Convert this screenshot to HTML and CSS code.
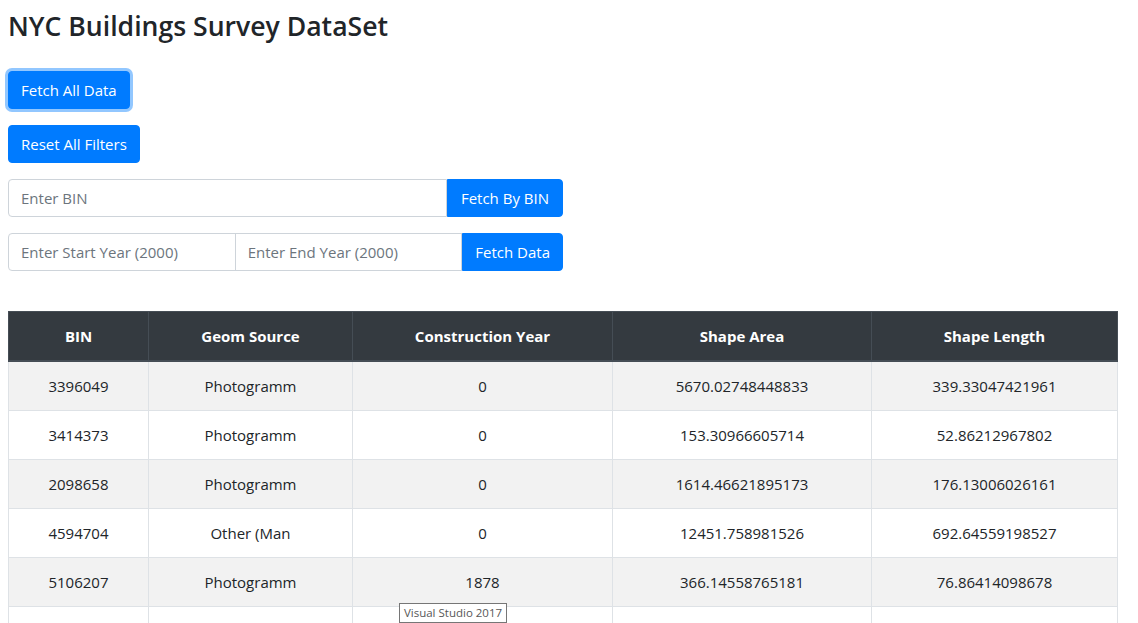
FILE: index.html
```html
<!DOCTYPE html>
<html>
<head>
<meta charset="utf-8">
<link rel="stylesheet" href="styles.css">
</head>
<body>
<div class="page">
  <h3 class="title">NYC Buildings Survey DataSet</h3>
  <div class="actions">
    <button class="btn btn-focus">Fetch All Data</button>
    <button class="btn">Reset All Filters</button>
  </div>
  <div class="input-group">
    <input class="field field-first" placeholder="Enter BIN">
    <button class="btn btn-append btn-wide">Fetch By BIN</button>
  </div>
  <div class="input-group">
    <input class="field field-first" placeholder="Enter Start Year (2000)">
    <input class="field field-mid" placeholder="Enter End Year (2000)">
    <button class="btn btn-append">Fetch Data</button>
  </div>
  <table class="data-table">
    <thead>
      <tr>
        <th class="c1">BIN</th>
        <th class="c2">Geom Source</th>
        <th class="c3">Construction Year</th>
        <th class="c4">Shape Area</th>
        <th class="c5">Shape Length</th>
      </tr>
    </thead>
    <tbody>
      <tr><td>3396049</td><td>Photogramm</td><td>0</td><td>5670.02748448833</td><td>339.33047421961</td></tr>
      <tr><td>3414373</td><td>Photogramm</td><td>0</td><td>153.30966605714</td><td>52.86212967802</td></tr>
      <tr><td>2098658</td><td>Photogramm</td><td>0</td><td>1614.46621895173</td><td>176.13006026161</td></tr>
      <tr><td>4594704</td><td>Other (Man</td><td>0</td><td>12451.758981526</td><td>692.64559198527</td></tr>
      <tr><td>5106207</td><td>Photogramm</td><td>1878</td><td>366.14558765181</td><td>76.86414098678</td></tr>
      <tr class="partial"><td></td><td></td><td></td><td></td><td></td></tr>
    </tbody>
  </table>
</div>
<div class="tooltip">Visual Studio 2017</div>
</body>
</html>
```
FILE: styles.css
```css
html, body {
  margin: 0;
  padding: 0;
  background: #fff;
  overflow: hidden;
}
body {
  font-family: "Open Sans", "Noto Sans", sans-serif;
  font-size: 15px;
  color: #212529;
  height: 623px;
}
.page {
  padding: 8px;
}
.title {
  font-size: 26.6px;
  font-weight: 600;
  line-height: 34px;
  margin: 1px 0 0 0;
  color: #212529;
}
.actions {
  display: flex;
  flex-direction: column;
  align-items: flex-start;
  gap: 16px;
  margin-top: 28px;
}
.btn {
  font-family: inherit;
  font-size: 15px;
  line-height: 24px;
  padding: 6px 12px;
  height: 38px;
  border: 1px solid #007bff;
  background: #007bff;
  color: #fff;
  border-radius: 4px;
  cursor: pointer;
}
.btn-focus {
  box-shadow: 0 0 0 3px rgba(38, 143, 255, 0.5);
}
.input-group {
  display: flex;
  width: 555px;
  margin-top: 16px;
  height: 38px;
}
.field {
  flex: 1 1 0;
  min-width: 0;
  font-family: inherit;
  font-size: 15px;
  height: 38px;
  box-sizing: border-box;
  padding: 6px 12px;
  border: 1px solid #ced4da;
  color: #495057;
  outline: none;
}
.field::placeholder {
  color: #6c757d;
}
.field-first {
  border-radius: 4px 0 0 4px;
}
.field-mid {
  margin-left: -1px;
  border-radius: 0;
}
.btn-append {
  border-radius: 0 4px 4px 0;
  flex: none;
}
.btn-wide {
  padding: 6px 13px;
}
.data-table {
  margin-top: 40px;
  width: 1110px;
  border-collapse: collapse;
  table-layout: fixed;
}
.data-table th,
.data-table td {
  text-align: center;
  padding: 12px;
  line-height: 24px;
  box-sizing: border-box;
}
.data-table th {
  background: #343a40;
  color: #fff;
  font-weight: 700;
  border: 1px solid #454d55;
  border-bottom-width: 2px;
}
.data-table td {
  border: 1px solid #dee2e6;
  height: 49px;
}
.data-table tbody tr:nth-child(odd) {
  background: #f2f2f2;
}
.c1 { width: 140px; }
.c2 { width: 204px; }
.c3 { width: 260px; }
.c4 { width: 259px; }
.c5 { width: auto; }
.tooltip {
  position: absolute;
  left: 399px;
  top: 603px;
  width: 108px;
  height: 20px;
  box-sizing: border-box;
  border: 1px solid #767676;
  background: #fff;
  color: #575757;
  font-family: "Open Sans", sans-serif;
  font-size: 11.5px;
  line-height: 18px;
  text-align: center;
}
```
